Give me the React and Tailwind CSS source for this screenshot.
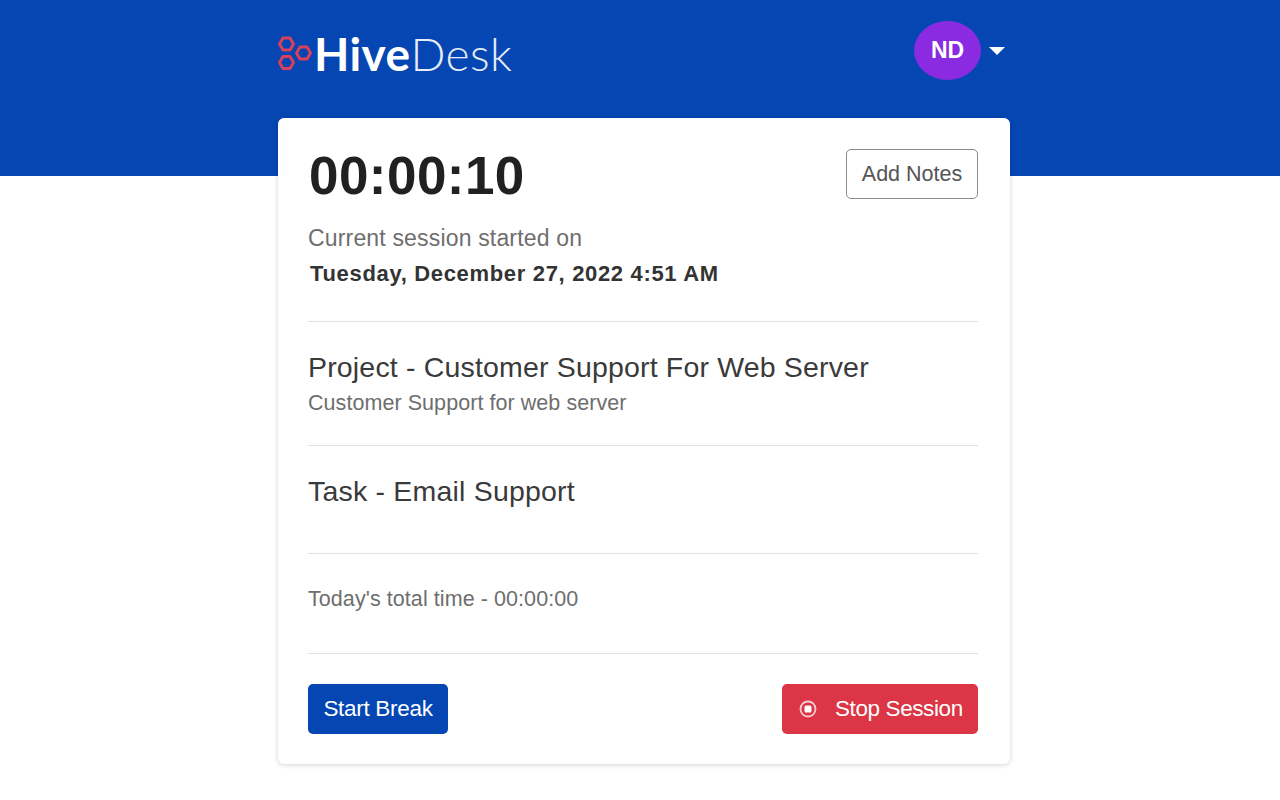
import React from "react";

const sans = { fontFamily: '"Liberation Sans", Arial, sans-serif' };

const HexLogo = () => (
  <svg width="36" height="38" viewBox="0 0 36 38" fill="none" stroke="#d8405c" strokeWidth="3" strokeLinejoin="round">
    <polygon points="1.5,9 5,2.9 12,2.9 15.5,9 12,15.1 5,15.1" />
    <polygon points="1.5,27.5 5,21.4 12,21.4 15.5,27.5 12,33.6 5,33.6" />
    <polygon points="18.5,18 22,11.9 29,11.9 32.5,18 29,24.1 22,24.1" />
  </svg>
);

const App = () => {
  return (
    <div className="min-h-[800px] bg-white text-[#333]" style={sans}>
      <header className="h-[176px] bg-[#0546b2]">
        <div className="w-[732px] ml-[278px] flex justify-between">
          <div className="flex items-center h-[38px] mt-[35px]">
            <HexLogo />
            <span className="text-[46px] tracking-[0.4px] leading-none text-white font-['Lato',sans-serif] font-bold">
              Hive<span className="font-light text-[#e6ecf8]">Desk</span>
            </span>
          </div>
          <div className="flex items-center h-[59px] mt-[21px] mr-[5px]">
            <div className="w-[67px] h-[59px] rounded-[50%] bg-[#8a2be2] flex items-center justify-center text-white font-bold text-[23px]">
              ND
            </div>
            <div className="ml-[8px] w-0 h-0 border-x-[8px] border-x-transparent border-t-[8px] border-t-white" />
          </div>
        </div>
      </header>

      <main className="relative w-[732px] ml-[278px] -mt-[58px] h-[646px] bg-white rounded-[6px] shadow-[0_1px_5px_rgba(0,0,0,0.18)] pl-[30px] pr-[32px] pt-[30px]">
        <div className="flex justify-between items-start h-[173px]">
          <div>
            <div className="ml-px text-[53px] leading-[56px] font-bold text-[#212121] tracking-[0.45px]">00:00:10</div>
            <div className="mt-[21px] text-[23px] leading-[26px] text-[#6e6e6e] tracking-[0.17px]">Current session started on</div>
            <div className="mt-[10px] ml-[2px] text-[22px] leading-[26px] font-bold text-[#333] tracking-[0.67px]">Tuesday, December 27, 2022 4:51 AM</div>
          </div>
          <button className="mt-[1px] w-[132px] h-[50px] border border-[#8c8c8c] rounded-[5px] text-[21.5px] text-[#555] bg-white">
            Add Notes
          </button>
        </div>
        <hr className="border-t border-[#e2e2e2]" />

        <div className="h-[123px] pt-[28px]">
          <div className="text-[28.5px] leading-[34px] text-[#3a3a3a] tracking-[0.17px]">Project - Customer Support For Web Server</div>
          <div className="mt-[7px] text-[21.5px] leading-[25px] text-[#6e6e6e] tracking-[0.06px]">Customer Support for web server</div>
        </div>
        <hr className="border-t border-[#e2e2e2]" />

        <div className="h-[107px] pt-[28px]">
          <div className="text-[28.5px] leading-[34px] text-[#3a3a3a] tracking-[0.2px]">Task - Email Support</div>
        </div>
        <hr className="border-t border-[#e2e2e2]" />

        <div className="h-[99px] pt-[32px]">
          <div className="text-[21.5px] leading-[26px] text-[#6e6e6e] tracking-[0.07px]">Today's total time - 00:00:00</div>
        </div>
        <hr className="border-t border-[#e2e2e2]" />

        <div className="flex justify-between pt-[30px]">
          <button className="w-[140px] h-[50px] bg-[#0546b2] rounded-[5px] text-white text-[22.5px] tracking-[-0.3px]">
            Start Break
          </button>
          <button className="w-[196px] h-[50px] bg-[#dc3545] rounded-[5px] text-white text-[22.5px] tracking-[-0.4px] flex items-center pl-[17px]">
            <svg width="18" height="18" viewBox="0 0 18 18" fill="none">
              <circle cx="9" cy="9" r="7.5" stroke="#f5cdd2" strokeWidth="1.8" />
              <rect x="5.5" y="5.5" width="7" height="7" rx="1.5" fill="#fff" />
            </svg>
            <span className="ml-[18px]">Stop Session</span>
          </button>
        </div>
      </main>
    </div>
  );
};

export default App;
